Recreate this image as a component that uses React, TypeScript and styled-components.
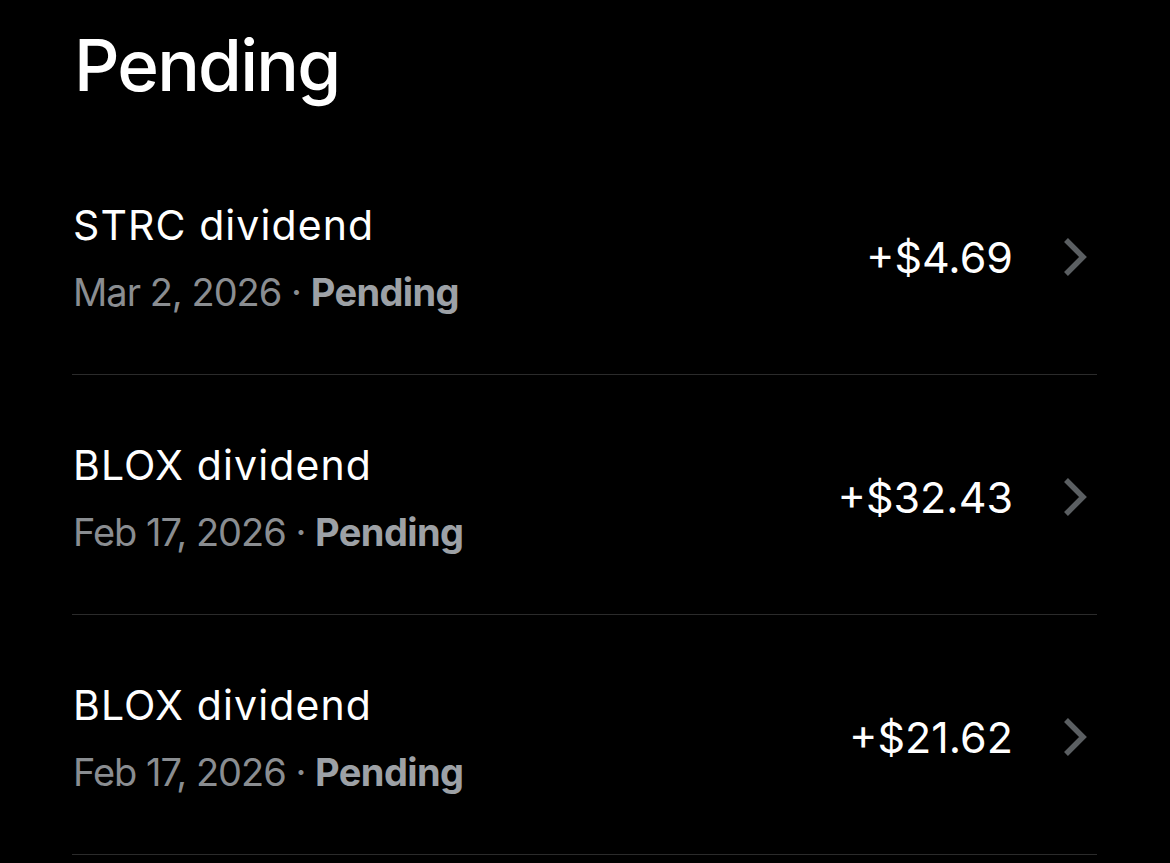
import React from "react";
import styled, { createGlobalStyle } from "styled-components";

const GlobalStyle = createGlobalStyle`
  html, body {
    margin: 0;
    padding: 0;
    background: #000;
  }
  body {
    font-family: Inter, "Noto Sans", "Liberation Sans", sans-serif;
    color: #fff;
    -webkit-font-smoothing: antialiased;
  }
`;

const Page = styled.div`
  padding: 21px 73px 0 72px;
  min-height: 863px;
  box-sizing: border-box;
  background: #000;
`;

const Header = styled.h1`
  margin: 0 0 26px 2px;
  font-size: 71px;
  line-height: 88px;
  font-weight: 500;
  letter-spacing: -1.8px;
  color: #fff;
`;

const List = styled.div`
  display: flex;
  flex-direction: column;
`;

const Row = styled.div`
  height: 240px;
  box-sizing: border-box;
  border-bottom: 1px solid #2b2b2b;
  display: flex;
  align-items: center;
  padding: 8px 10px 0 1px;
`;

const Info = styled.div`
  flex: 1;
  display: flex;
  flex-direction: column;
`;

const Title = styled.div`
  font-size: 41px;
  line-height: 50px;
  font-weight: 400;
  letter-spacing: 1.1px;
  color: #fff;
`;

const Sub = styled.div`
  margin-top: 17px;
  font-size: 38px;
  line-height: 50px;
  letter-spacing: -1px;
  color: #8a8d91;
`;

const Status = styled.span`
  font-weight: 700;
  letter-spacing: -0.6px;
  color: #9da1a6;
`;

const AmountWrap = styled.div`
  display: flex;
  align-items: center;
  margin-top: -4px;
`;

const Amount = styled.div`
  font-size: 43px;
  line-height: 52px;
  font-weight: 400;
  color: #fff;
  margin-right: 50px;
`;

const Chevron = () => (
  <svg width="24" height="40" viewBox="0 0 24 40" aria-hidden>
    <path
      d="M3 3 L20 20 L3 37"
      fill="none"
      stroke="#5b5f62"
      strokeWidth="5.5"
      strokeLinecap="butt"
      strokeLinejoin="miter"
    />
  </svg>
);

const items = [
  { title: "STRC dividend", date: "Mar 2, 2026", amount: "+$4.69" },
  { title: "BLOX dividend", date: "Feb 17, 2026", amount: "+$32.43" },
  { title: "BLOX dividend", date: "Feb 17, 2026", amount: "+$21.62" },
];

export default function App() {
  return (
    <>
      <GlobalStyle />
      <Page>
        <Header>Pending</Header>
        <List>
          {items.map((it, i) => (
            <Row key={i}>
              <Info>
                <Title>{it.title}</Title>
                <Sub>
                  {it.date} · <Status>Pending</Status>
                </Sub>
              </Info>
              <AmountWrap>
                <Amount>{it.amount}</Amount>
                <Chevron />
              </AmountWrap>
            </Row>
          ))}
        </List>
      </Page>
    </>
  );
}
